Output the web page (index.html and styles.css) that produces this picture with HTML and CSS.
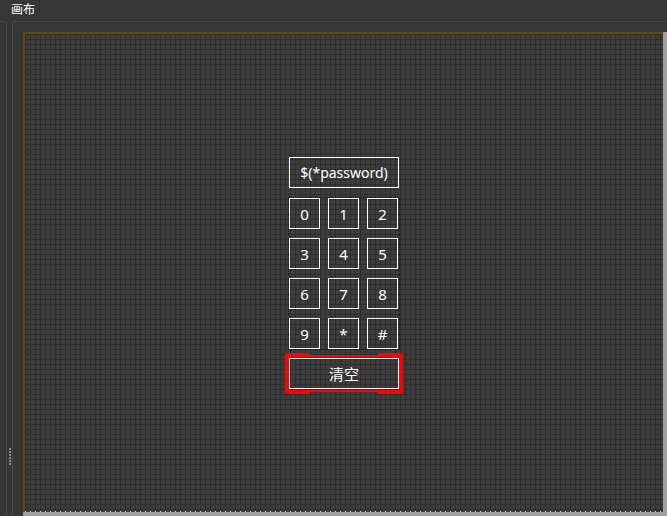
FILE: index.html
```html
<html>
<head>
    <meta charset="UTF-8">
    <title>画布</title>
    <link rel="stylesheet" href="styles.css">
</head>
<body>
    <div class="titlebar">画布</div>
    <div class="workspace">
        <div class="side-pane"></div>
        <div class="splitter"><div class="grip"></div></div>
        <div class="canvas-pane">
            <div class="viewport">
                <div class="scene">
                    <div class="form">
                        <div class="field password">$(*password)</div>
                        <div class="keypad">
                            <div class="key">0</div>
                            <div class="key">1</div>
                            <div class="key">2</div>
                            <div class="key">3</div>
                            <div class="key">4</div>
                            <div class="key">5</div>
                            <div class="key">6</div>
                            <div class="key">7</div>
                            <div class="key">8</div>
                            <div class="key">9</div>
                            <div class="key">*</div>
                            <div class="key">#</div>
                        </div>
                        <div class="clear-wrap">
                            <div class="field">清空</div>
                            <span class="selection"></span>
                        </div>
                    </div>
                </div>
            </div>
        </div>
    </div>
</body>
</html>
```

FILE: styles.css
```css
body {
    margin: 0;
    width: 667px;
    height: 516px;
    overflow: hidden;
    background-color: #363636;
    color: #fff;
    font-family: "Noto Sans", "Noto Sans CJK SC", sans-serif;
}

.titlebar {
    height: 21px;
    padding-left: 11px;
    font-size: 12px;
    line-height: 20px;
    box-sizing: border-box;
}

.workspace {
    display: flex;
    height: 495px;
}

.side-pane {
    width: 6px;
    border-top: 1px solid #4a4a4a;
    border-right: 1px solid #4a4a4a;
    border-top-right-radius: 3px;
}

.splitter {
    width: 5px;
    padding-top: 427px;
    box-sizing: border-box;
}

.grip {
    width: 2px;
    height: 17px;
    margin-left: 2px;
    background: linear-gradient(#8c8c8c 2px, transparent 2px) 0 0 / 2px 3px repeat-y;
}

.canvas-pane {
    flex: 1;
    display: flex;
    border-top: 1px solid #4a4a4a;
    border-left: 1px solid #4a4a4a;
    border-top-left-radius: 3px;
    padding: 10px 0 0 10px;
}

.viewport {
    flex: 1;
    display: flex;
    padding: 0 4px 4px 0;
    background-color: #a0a0a0;
}

.scene {
    flex: 1;
    display: flex;
    align-items: center;
    justify-content: center;
    border-left: 2px solid #5b4c17;
    border-top: 2px solid #5b4c17;
    background-color: #3d3d3d;
    background-image:
        linear-gradient(90deg, #d8d8d8 1px, transparent 1px),
        linear-gradient(#2f2f2f 1px, transparent 1px),
        linear-gradient(90deg, #2f2f2f 1px, transparent 1px);
    background-size: 5px 1px, 5px 5px, 5px 5px;
    background-position: left bottom, 0 0, 0 0;
    background-repeat: repeat-x, repeat, repeat;
}

.form {
    display: flex;
    flex-direction: column;
    width: 110px;
}

.field {
    height: 31px;
    border: 1px solid #fff;
    box-sizing: border-box;
    display: flex;
    align-items: center;
    justify-content: center;
    font-size: 15px;
}

.password {
    font-size: 14px;
}

.keypad {
    display: grid;
    grid-template-columns: repeat(3, 31px);
    grid-auto-rows: 31px;
    column-gap: 8px;
    row-gap: 9px;
    margin: 10px 0 9px;
    outline: 1px dotted #161616;
}

.key {
    border: 1px solid #fff;
    display: flex;
    align-items: center;
    justify-content: center;
    font-size: 15px;
}

.clear-wrap {
    position: relative;
}

.selection {
    position: absolute;
    top: -3px;
    bottom: -3px;
    left: -4px;
    right: -4px;
    border-top: 2px solid #ff0000;
    border-bottom: 2px solid #ff0000;
    border-left: 4px solid #ff0000;
    border-right: 4px solid #ff0000;
}

.selection::before,
.selection::after {
    content: "";
    position: absolute;
    left: -4px;
    right: -4px;
    height: 2px;
    background: linear-gradient(90deg, #ff0000 25px, transparent 25px, transparent calc(100% - 25px), #ff0000 calc(100% - 25px));
}

.selection::before {
    top: -4px;
}

.selection::after {
    bottom: -4px;
}
```
